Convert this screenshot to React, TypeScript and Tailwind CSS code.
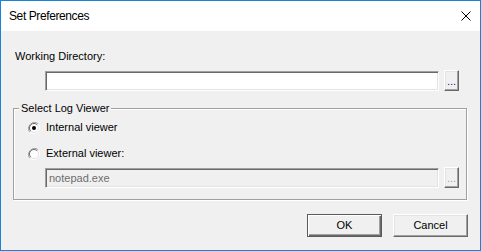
const ui = { fontFamily: '"Liberation Sans", Arial, sans-serif' };

function Radio({ checked }: { checked?: boolean }) {
  return (
    <svg width="12" height="12" viewBox="0 0 12 12" className="shrink-0">
      <path d="M10.2 1.8 A6 6 0 0 0 1.8 10.2" fill="none" stroke="#a0a0a0" strokeWidth="1" />
      <path d="M1.8 10.2 A6 6 0 0 0 10.2 1.8" fill="none" stroke="#ffffff" strokeWidth="1" />
      <circle cx="6" cy="6" r="4.5" fill="#ffffff" />
      <path d="M9.2 2.8 A4.5 4.5 0 0 0 2.8 9.2" fill="none" stroke="#696969" strokeWidth="1" />
      <path d="M2.8 9.2 A4.5 4.5 0 0 0 9.2 2.8" fill="none" stroke="#e3e3e3" strokeWidth="1" />
      {checked && <circle cx="6" cy="6" r="2" fill="#000000" />}
    </svg>
  );
}

function Field({ value, disabled }: { value?: string; disabled?: boolean }) {
  return (
    <div
      className={`mt-[1px] w-[394px] h-[20px] border-t border-l border-t-[#a0a0a0] border-l-[#a0a0a0] border-b border-r border-b-white border-r-white shadow-[inset_1px_1px_0_#696969,inset_-1px_-1px_0_#e3e3e3] flex items-center pl-[3px] text-[11px] ${
        disabled ? "bg-[#f0f0f0] text-[#6d6d6d]" : "bg-white text-black"
      }`}
    >
      {value}
    </div>
  );
}

function Browse({ disabled }: { disabled?: boolean }) {
  return (
    <div className="w-[15px] h-[21px] bg-[#f0f0f0] border-t border-l border-t-white border-l-white border-b border-r border-b-[#696969] border-r-[#696969] shadow-[inset_-1px_-1px_0_#a0a0a0,inset_1px_1px_0_#e3e3e3] flex items-end justify-center pb-[3px]">
      <span
        className={`text-[11px] leading-[11px] ${disabled ? "text-[#a0a0a0]" : "text-[#1a1a8a]"}`}
      >
        ...
      </span>
    </div>
  );
}

function PushButton({ label, isDefault }: { label: string; isDefault?: boolean }) {
  return (
    <div
      className={`w-[75px] h-[23px] bg-[#f0f0f0] flex items-center justify-center text-[11px] text-black ${
        isDefault
          ? "border border-[#5a5a5a] shadow-[inset_1px_1px_0_#ffffff,inset_-1px_-1px_0_#696969,inset_-2px_-2px_0_#a0a0a0]"
          : "border-t border-l border-t-white border-l-white border-b border-r border-b-[#696969] border-r-[#696969] shadow-[inset_-1px_-1px_0_#a0a0a0,inset_1px_1px_0_#e3e3e3]"
      }`}
    >
      {label}
    </div>
  );
}

export default function App() {
  return (
    <div
      style={ui}
      className="w-[481px] h-[251px] border border-[#1883d7] bg-[#f0f0f0] flex flex-col overflow-hidden"
    >
      {/* title bar */}
      <div className="h-[30px] bg-white flex items-center justify-between pl-[8px] pr-[9px] shrink-0">
        <span className="text-[12px] tracking-[-0.4px] text-black">Set Preferences</span>
        <svg width="10" height="10" viewBox="0 0 10 10">
          <path d="M0.5 0.5 L9.5 9.5 M9.5 0.5 L0.5 9.5" stroke="#000" strokeWidth="1" />
        </svg>
      </div>

      <div className="flex flex-col pt-[19px] text-[11px] leading-[13px] text-black">
        <div className="pl-[14px]">Working Directory:</div>
        <div className="flex items-start gap-[5px] pl-[44px] mt-[7px]">
          <Field />
          <Browse />
        </div>

        {/* group box */}
        <div className="relative ml-[12px] mt-[17px] w-[454px] border border-[#a0a0a0] shadow-[1px_1px_0_#ffffff,inset_1px_1px_0_#ffffff] pl-[14px] pt-[12px] pb-[11px]">
          <span className="absolute left-[5px] top-[-7px] px-[2px] bg-[#f0f0f0] leading-[13px]">
            Select Log Viewer
          </span>
          <div className="flex items-center gap-[6px] h-[13px]">
            <Radio checked />
            <span>Internal viewer</span>
          </div>
          <div className="flex items-center gap-[6px] h-[13px] mt-[13px]">
            <Radio />
            <span>External viewer:</span>
          </div>
          <div className="flex items-start gap-[5px] pl-[17px] mt-[7px]">
            <Field value="notepad.exe" disabled />
            <Browse disabled />
          </div>
        </div>

        <div className="flex justify-end gap-[11px] pr-[12px] mt-[14px]">
          <PushButton label="OK" isDefault />
          <PushButton label="Cancel" />
        </div>
      </div>
    </div>
  );
}
